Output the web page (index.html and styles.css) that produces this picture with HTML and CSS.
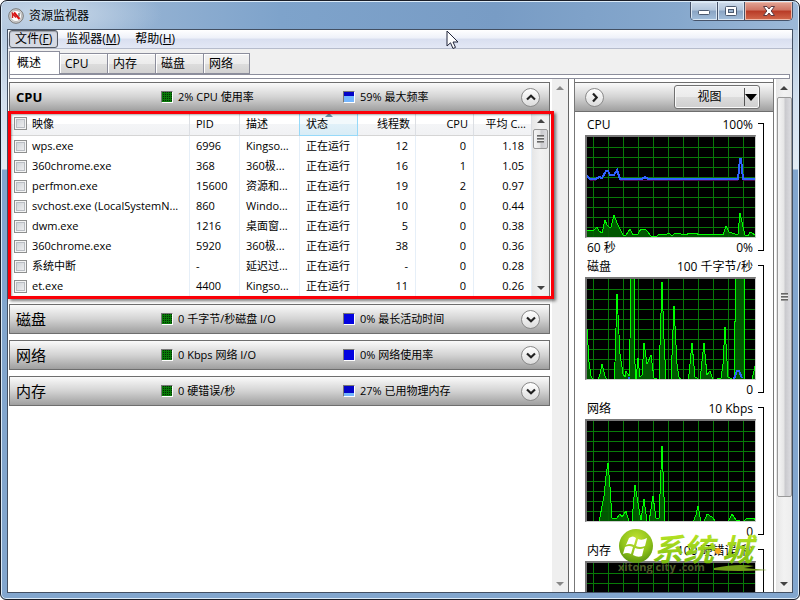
FILE: index.html
```html
<!DOCTYPE html>
<html lang="zh-CN">
<head>
<meta charset="utf-8">
<title>资源监视器</title>
<link rel="stylesheet" href="styles.css">
</head>
<body>
<svg class="defs" aria-hidden="true">
  <symbol id="up" viewBox="0 0 8 4"><path d="M0 4L4 0L8 4Z"/></symbol>
  <symbol id="down" viewBox="0 0 8 4"><path d="M0 0L4 4L8 0Z"/></symbol>
  <symbol id="chevron" viewBox="0 0 10 7"><path d="M1 1.5L5 5.2L9 1.5" fill="none" stroke="#222" stroke-width="2.2"/></symbol>
  <symbol id="grid" viewBox="0 0 168 100" preserveAspectRatio="none"><path fill="none" stroke="#087a08" shape-rendering="crispEdges" d="M6.500 0V100M21.500 0V100M36.500 0V100M51.500 0V100M66.500 0V100M81.500 0V100M96.500 0V100M111.500 0V100M126.500 0V100M141.500 0V100M156.500 0V100M0 10.500H168M0 20.500H168M0 30.500H168M0 40.500H168M0 50.500H168M0 60.500H168M0 70.500H168M0 80.500H168M0 90.500H168"/></symbol>
</svg>
<div class="window">
  <header class="titlebar">
    <svg class="app-icon" viewBox="0 0 16 16"><circle cx="8" cy="8" r="7.300" fill="#d5d5d5" stroke="#777"/><circle cx="8" cy="8" r="5.500" fill="#fff" stroke="#999" stroke-width=".6"/><path d="M4.500 10V5.500L8 9.500" fill="none" stroke="#c22" stroke-width="1.500"/><path d="M6 4.500L11.500 11" stroke="#d11" stroke-width="2.200"/><path d="M11 5V8.500" stroke="#555" stroke-width="1.200"/></svg>
    <h1>资源监视器</h1>
    <div class="caption">
      <button class="cap" aria-label="最小化"><svg width="14" height="12" viewBox="0 0 14 12"><rect x="1.500" y="5.500" width="11" height="4" rx="1" fill="#fff" stroke="#4c5a70"/></svg></button>
      <button class="cap" aria-label="最大化"><svg width="14" height="12" viewBox="0 0 14 12"><rect x="1.500" y="1.500" width="11" height="9" rx="1" fill="#fff" stroke="#4c5a70"/><rect x="4.500" y="4.500" width="5" height="3" fill="#9bb4d0" stroke="#4c5a70"/></svg></button>
      <button class="cap cap-close" aria-label="关闭"><svg width="14" height="12" viewBox="0 0 14 12"><path d="M1.500 1.500H5L7 4L9 1.500H12.500L9.200 6L12.500 10.500H9L7 8L5 10.500H1.500L4.800 6Z" fill="#fff" stroke="#5b3a42"/></svg></button>
    </div>
  </header>
  <div class="client">
    <nav class="menu">
      <button class="active">文件(<u>F</u>)</button>
      <button>监视器(<u>M</u>)</button>
      <button>帮助(<u>H</u>)</button>
    </nav>
    <div class="tabs" role="tablist">
      <button role="tab" aria-selected="true" class="selected">概述</button>
      <button role="tab">CPU</button>
      <button role="tab">内存</button>
      <button role="tab">磁盘</button>
      <button role="tab">网络</button>
    </div>
    <div class="tab-edge"></div>
    <main class="panes">
      <div class="left">
        <div class="sections">
          <section class="cpu">
            <div class="bar"><h2 class="strong">CPU</h2><span class="legend"><i class="chip green"></i>2% CPU 使用率</span><span class="legend"><i class="chip part60"></i>59% 最大频率</span><button class="round flip" aria-label="折叠"><svg width="10" height="7"><use href="#chevron"/></svg></button></div>
            <div class="list">
              <table>
                <colgroup><col><col class="c-pid"><col class="c-desc"><col class="c-num"><col class="c-num"><col class="c-num"><col class="c-num"></colgroup>
                <thead><tr><th><label><input type="checkbox">映像</label></th><th>PID</th><th>描述</th><th class="sorted">状态<svg class="sort" width="8" height="4"><use href="#up"/></svg></th><th class="num">线程数</th><th class="num">CPU</th><th class="num">平均 C...</th></tr></thead>
                <tbody>
                <tr><td><label><input type="checkbox">wps.exe</label></td><td>6996</td><td>Kingso...</td><td>正在运行</td><td class="num">12</td><td class="num">0</td><td class="num">1.18</td></tr>
                <tr><td><label><input type="checkbox">360chrome.exe</label></td><td>368</td><td>360极...</td><td>正在运行</td><td class="num">16</td><td class="num">1</td><td class="num">1.05</td></tr>
                <tr><td><label><input type="checkbox">perfmon.exe</label></td><td>15600</td><td>资源和...</td><td>正在运行</td><td class="num">19</td><td class="num">2</td><td class="num">0.97</td></tr>
                <tr><td><label><input type="checkbox">svchost.exe (LocalSystemN...</label></td><td>860</td><td>Windo...</td><td>正在运行</td><td class="num">10</td><td class="num">0</td><td class="num">0.44</td></tr>
                <tr><td><label><input type="checkbox">dwm.exe</label></td><td>1216</td><td>桌面窗...</td><td>正在运行</td><td class="num">5</td><td class="num">0</td><td class="num">0.38</td></tr>
                <tr><td><label><input type="checkbox">360chrome.exe</label></td><td>5920</td><td>360极...</td><td>正在运行</td><td class="num">38</td><td class="num">0</td><td class="num">0.36</td></tr>
                <tr><td><label><input type="checkbox">系统中断</label></td><td>-</td><td>延迟过...</td><td>正在运行</td><td class="num">-</td><td class="num">0</td><td class="num">0.28</td></tr>
                <tr><td><label><input type="checkbox">et.exe</label></td><td>4400</td><td>Kingso...</td><td>正在运行</td><td class="num">11</td><td class="num">0</td><td class="num">0.26</td></tr>
                </tbody>
              </table>
              <div class="scroll"><svg width="8" height="4"><use href="#up"/></svg><div class="thumb small"></div><svg class="end" width="8" height="4"><use href="#down"/></svg></div>
            </div>
            <div class="highlight"></div>
          </section>
          <section class="bar"><h2>磁盘</h2><span class="legend"><i class="chip green"></i>0 千字节/秒磁盘 I/O</span><span class="legend"><i class="chip"></i>0% 最长活动时间</span><button class="round" aria-label="展开"><svg width="10" height="7"><use href="#chevron"/></svg></button></section>
          <section class="bar"><h2>网络</h2><span class="legend"><i class="chip green"></i>0 Kbps 网络 I/O</span><span class="legend"><i class="chip"></i>0% 网络使用率</span><button class="round" aria-label="展开"><svg width="10" height="7"><use href="#chevron"/></svg></button></section>
          <section class="bar"><h2>内存</h2><span class="legend"><i class="chip green"></i>0 硬错误/秒</span><span class="legend"><i class="chip part30"></i>27% 已用物理内存</span><button class="round" aria-label="展开"><svg width="10" height="7"><use href="#chevron"/></svg></button></section>
        </div>
        <div class="scroll idle"><svg width="8" height="4"><use href="#up"/></svg><svg class="end" width="8" height="4"><use href="#down"/></svg></div>
      </div>
      <aside class="right">
        <div class="graphs">
          <div class="bar graph-bar"><button class="round next" aria-label="隐藏图形"><svg width="10" height="7"><use href="#chevron"/></svg></button><button class="view"><span>视图</span><svg width="12" height="7" viewBox="0 0 12 7"><path d="M0 0H12L6 7Z"/></svg></button></div>
          <div class="graph-list">
            <figure>
              <figcaption><span>CPU</span><span>100%</span></figcaption>
              <svg class="plot" viewBox="0 0 168 100" preserveAspectRatio="none"><use href="#grid"/><path class="area" d="M-2 102V93H7L10 90L12 94L15 96L18 83L20 88L22 90H24L27 78L30 86L33 92L36 98H39L43 92L46 98L51 97L54 92H58L61 95L64 99H70L72 97L78 98L82 96L85 99L88 96L94 97L98 98L103 96H109L112 98L118 97H123L128 98L133 97L136 98L139 89L142 95L148 97H151L153 76L156 90L158 98L161 99L163 95L170 99V102Z"/><path class="line-shadow" d="M33 43.500H151M156 43.500H168M3 43.500H9"/><path class="line" d="M0 39L3 42H9L12 40L15 41L19 34H21L23 38H27L30 33L33 42H55L58 40L61 42H151L153 22H154L156 42H168"/></svg>
              <div class="range"><span>60 秒</span><span>0%</span></div>
              <i class="bracket"></i>
            </figure>
            <figure>
              <figcaption><span>磁盘</span><span>100 千字节/秒</span></figcaption>
              <svg class="plot" viewBox="0 0 168 100" preserveAspectRatio="none"><use href="#grid"/><path class="area" d="M-2 102V50H0L1 66L2 83L4 97L6 101H11L13 95L15 85L18 97L20 101H27L28 83L30 15L33 75L36 95L38 98L39 92L42 97L43 60L44 0V-2H47V0L48 85L49 101L51 79L53 98L55 96L57 64L60 85L64 76L67 99L72 101L73 66L75 3L77 60L79 101H84L87 27L90 85L92 98L94 101H101L102 95L105 64L108 98L113 101L117 64L120 96L123 92L126 101L134 99L136 85L138 48L141 98L147 101V42H148V-2H157V101H165L168 87L170 80V102Z"/><path class="line" d="M147 100L150 92H152L155 99M41 100L42 99L43 100"/></svg>
              <div class="range"><span></span><span>0</span></div>
              <i class="bracket"></i>
            </figure>
            <figure>
              <figcaption><span>网络</span><span>10 Kbps</span></figcaption>
              <svg class="plot" viewBox="0 0 168 100" preserveAspectRatio="none"><use href="#grid"/><path class="area" d="M12 101L17 75L19 55L21 42L23 66L25 97H30L33 93L35 96L39 90L42 101H45L48 64L52 88L54 99L57 78L60 101H62L66 75L69 97H72L75 25L78 101H106L109 94L111 85L114 101H117L120 93L125 96L129 101H141L145 93L149 99L156 101L160 97H167L170 101Z"/></svg>
              <div class="range"><span></span><span>0</span></div>
              <i class="bracket"></i>
            </figure>
            <figure>
              <figcaption><span>内存</span><span>100 硬错误/秒</span></figcaption>
              <svg class="plot" viewBox="0 0 168 100" preserveAspectRatio="none"><use href="#grid"/></svg>
              <i class="bracket"></i>
            </figure>
          </div>
        </div>
        <div class="scroll"><svg width="8" height="4"><use href="#up"/></svg><div class="thumb"></div><svg class="end" width="8" height="4"><use href="#down"/></svg></div>
      </aside>
    </main>
  </div>
  <svg class="watermark" width="152" height="56" viewBox="0 0 152 56">
    <defs>
      <radialGradient id="orb" cx=".5" cy=".3" r=".7"><stop offset="0" stop-color="#c2e233"/><stop offset=".6" stop-color="#8fc31a"/><stop offset="1" stop-color="#5d9610"/></radialGradient>
      <linearGradient id="ink" x1="0" y1="0" x2="0" y2="1"><stop offset="0" stop-color="#c8ee2a"/><stop offset="1" stop-color="#6fb60c"/></linearGradient>
    </defs>
    <circle cx="18" cy="18" r="17" fill="url(#orb)"/>
    <path d="M11 10Q15 7 18 10L16 17Q12 15 8 17ZM20 11Q24 13 29 10L27 18Q22 20 18 18ZM7 19Q11 17 15 19L13 26Q9 24 5 26ZM17 20Q22 22 26 20L24 28Q20 30 15 27Z" fill="#fff"/>
    <path d="M96 40Q120 35 136 38L126 40L149 42Q120 44 96 42Z" fill="#719c16"/>
    <g class="brand" fill="url(#ink)"><text x="34" y="33">系统</text><text x="104" y="33">城</text></g>
    <circle cx="100" cy="23" r="3" fill="#f5a81c"/>
    <text class="domain" x="0" y="43">xitong city .com</text>
  </svg>
  <svg class="cursor" width="13" height="20" viewBox="0 0 13 20"><path d="M1 1V16L4.500 12.800L7 18.500L9.500 17.400L7 12H12Z" fill="#fff" stroke="#20253a"/></svg>
</div>
</body>
</html>
```
FILE: styles.css
```css
* { box-sizing: border-box; }
body { margin: 0; background: #fff; color: #000; font: 12px/18px "Open Sans", "Noto Sans CJK SC", sans-serif; }
button { font: inherit; color: inherit; margin: 0; padding: 0; border: 0; background: none; }
h1, h2, figure { margin: 0; font-weight: 400; }
h1 { font-size: 12px; }
svg { display: block; }
.defs { position: absolute; width: 0; height: 0; }

.window {
  position: relative; display: flex; flex-direction: column; height: 100vh; overflow: hidden;
  border: 1px solid #1a1e28; border-radius: 7px 7px 6px 6px;
  box-shadow: inset 0 0 0 1px #dcebf8;
  background: linear-gradient(#a9c0da, #d3e0ee 100px, #e3ebf4 168px, #82a6ce 169px, #82a6ce);
}
.titlebar {
  display: flex; align-items: center; gap: 5px; flex: 0 0 28px; margin: 1px 1px -1px; padding-left: 6px;
  border-radius: 6px 6px 0 0;
  background: radial-gradient(ellipse 110px 34px at 50px 12px, #c7d7e8, #c7d7e800), linear-gradient(90deg, #a9c0da, #7ea3cb 35%, #789cc5 62%, #86a8cd 85%, #9db9d8);
}
.app-icon { width: 16px; height: 16px; }
.caption { display: flex; align-self: flex-start; height: 19px; margin-left: auto; margin-right: 5px; border: 1px solid #46536a; border-top: 0; border-radius: 0 0 5px 5px; overflow: hidden; }
.cap { display: grid; place-items: center; width: 27px; border-right: 1px solid #46536a; background: linear-gradient(#cfdceb, #b2c5db 45%, #8aa4c3 50%, #a3bfdc); box-shadow: inset 0 0 0 1px #dbe7f3; }
.cap-close { width: 47px; border: 0; background: linear-gradient(#e2a596, #cf7463 45%, #b83a26 50%, #d2694d); box-shadow: inset 0 0 0 1px #efb9a9; }

.client { flex: 1; min-height: 0; display: flex; flex-direction: column; margin: 0 6px 6px; border: 1px solid #435063; background: #f0f0f0; }
.menu { display: flex; gap: 1px; flex: 0 0 19px; padding-left: 1px; border-bottom: 1px solid #b6bccc; background: linear-gradient(#fff, #eef1f9 45%, #d9dff0 50%, #e3e8f5); }
.menu button { height: 18px; padding: 0 7px; line-height: 18px; }
.menu .active { border: 1px solid #555a63; border-radius: 3px; padding: 0 5px; line-height: 16px; background: #d5d9e3; box-shadow: inset 0 1px 1px #9a9fa9; }
.tabs { display: flex; align-items: flex-end; flex: 0 0 25px; padding-left: 1px; }
.tabs button { width: 48px; height: 21px; padding-left: 5px; text-align: left; line-height: 18px; border: 1px solid #8c8e9c; border-left-width: 0; background: linear-gradient(#f3f3f3, #ececec 50%, #dcdcdc 55%, #d2d2d2); box-shadow: inset 1px 1px 0 #fff; }
.tabs .selected { width: 51px; height: 23px; padding-left: 7px; border-left-width: 1px; border-bottom: 0; background: #fff; box-shadow: none; }
.tabs button:last-child { width: 46px; }
.tab-edge { flex: 0 0 5px; margin: 0 2px 0 1px; border: 1px solid #8c8e9c; background: #fff; }

.panes { flex: 1; min-height: 0; display: flex; gap: 5px; background: #fff; }
.left { flex: 1; min-width: 0; display: flex; gap: 2px; border-right: 1px solid #666; }
.sections { flex: 1; min-width: 0; display: flex; flex-direction: column; gap: 6px; padding: 3px 0 0 1px; }
.bar { display: grid; grid-template-columns: 145px 182px 1fr auto; align-items: center; height: 30px; padding: 0 9px 0 6px; border: 1px solid #6e6e6e; background: linear-gradient(#fafafa, #d3d3d3 50%, #9f9f9f); }
.bar h2 { font-size: 15px; }
.bar .strong { font-size: 13px; font-weight: 700; }
.legend { display: flex; align-items: center; gap: 5px; font-size: 11px; white-space: nowrap; }
.chip { width: 12px; height: 12px; border: 1px solid #777; border-right-color: #fff; border-bottom-color: #fff; background: #0303e0; }
.chip.green { background: conic-gradient(#022f02 25%, #087a08 0) 0 0 / 2px 2px; }
.chip.part60 { background: linear-gradient(#0303c8 40%, #74b6ff 40%); }
.chip.part30 { background: linear-gradient(#0303c8 70%, #74b6ff 70%); }
.round { display: grid; place-items: center; width: 19px; height: 19px; border: 1px solid #8a8a8a; border-radius: 50%; background: linear-gradient(#fff, #dcdcdc); }
.flip svg { transform: rotate(180deg); }
.next svg { transform: rotate(-90deg); }

.cpu { position: relative; }
.list { display: flex; border: 1px solid #777; border-top: 0; background: #fff; padding-bottom: 1px; }
table { flex: 1; min-width: 0; width: 0; table-layout: fixed; border-collapse: separate; border-spacing: 0; font-size: 11px; }
.c-pid { width: 50px; }
.c-desc { width: 60px; }
.c-num { width: 58px; }
th, td { padding: 0 0 0 6px; font-weight: 400; text-align: left; white-space: nowrap; border-right: 1px solid #e6eff8; }
th { position: relative; height: 24px; border-right-color: #dcdfe4; border-bottom: 1px solid #d5d5d5; background: linear-gradient(#fff 50%, #f4f5f7 50%, #f1f2f4); }
td { height: 20px; }
th:first-child, td:first-child { padding-left: 4px; }
.num { text-align: right; padding: 0 7px 0 0; }
th.num { padding-right: 5px; }
.sorted { border-right-color: #96d9f9; border-bottom-color: #96d9f9; background: linear-gradient(#f2f9fc 50%, #e1f1f9 50%, #d8ecf6); box-shadow: -1px 0 #96d9f9; }
.sort { position: absolute; top: 1px; left: 25px; fill: #6d94a8; }
label { display: flex; align-items: center; gap: 5px; }
input { appearance: none; flex: none; width: 13px; height: 13px; margin: 0; border: 1px solid #8e8f8f; background: linear-gradient(135deg, #c9cdd3, #f4f4f4); box-shadow: inset 0 0 0 1px #f4f4f4, inset 0 0 0 2px #b9bdc3; }
.highlight { position: absolute; inset: 29px -4px -1px -1px; border: 3px solid #fb0007; box-shadow: 2px 2px 3px #0008, inset 1px 1px 2px #0005; pointer-events: none; }

.scroll { display: flex; flex-direction: column; align-items: center; flex: 0 0 17px; padding: 7px 0 6px; background: linear-gradient(90deg, #e6e6e6, #f2f2f2 50%, #ededed); fill: #444; }
.scroll .end { margin-top: auto; }
.scroll.idle { flex-basis: 16px; background: #efefef; fill: #888; }
.thumb { position: relative; width: 15px; flex: 0 1 400px; margin-top: 7px; border: 1px solid #999; border-radius: 2px; background: linear-gradient(90deg, #f5f5f5, #e6e6e6 45%, #c9c9cd 55%, #dcdce0); }
.thumb.small { flex-basis: 20px; margin-top: 6px; }
.thumb::after { content: ""; position: absolute; inset: calc(50% - 4px) 3px auto; height: 8px; background: repeating-linear-gradient(#666 0 1px, #999 1px 2px, #eee 2px 3px); }

.right { display: flex; gap: 2px; flex: 0 0 218px; min-width: 0; }
.right > .scroll { flex-basis: 16px; }
.graphs { flex: 1; min-width: 0; display: flex; flex-direction: column; padding-top: 3px; overflow: hidden; border: 1px solid #777; border-width: 0 1px; }
.graph-bar { display: flex; flex: 0 0 30px; justify-content: space-between; padding: 0 13px 0 10px; border-width: 1px 0; }
.view { display: flex; align-items: center; width: 86px; height: 24px; padding-right: 2px; border: 1px solid #707070; border-radius: 3px; background: linear-gradient(#f3f3f3, #ebebeb 50%, #dcdcdc 52%, #cfcfcf); box-shadow: inset 0 0 0 1px #fafafa; }
.view span { flex: 1; border-right: 1px solid #555; }
.graph-list { padding: 3px 9px 0 10px; }
figure { display: grid; grid-template-columns: 1fr 6px; grid-template-rows: 20px 103px 19px; column-gap: 2px; }
figcaption, .range { grid-column: 1; display: flex; align-items: center; justify-content: space-between; padding: 0 3px 0 2px; white-space: nowrap; }
.plot { grid-column: 1; width: 100%; height: 103px; border: 2px solid #777; border-right: 1px solid #ccc; border-bottom: 1px solid #ccc; background: #000; }
.area { fill: #005f00; fill-opacity: .9; stroke: #0f0; stroke-width: 1; shape-rendering: crispEdges; }
.line { fill: none; stroke: #2f62ff; stroke-width: 2; shape-rendering: crispEdges; }
.line-shadow { stroke: #4b0a4b; stroke-width: 1; }
.bracket { grid-column: 2; grid-row: 1 / 4; margin: 8px 0 6px; border: 1px solid #000; border-left: 0; }

.watermark { position: absolute; right: 29px; bottom: 15px; }
.brand { font: italic 700 31px "Noto Sans CJK SC", sans-serif; }
.domain { font: 700 11px "Open Sans", sans-serif; fill: #4d5c28; }
.cursor { position: absolute; left: 445px; top: 29px; }
```
